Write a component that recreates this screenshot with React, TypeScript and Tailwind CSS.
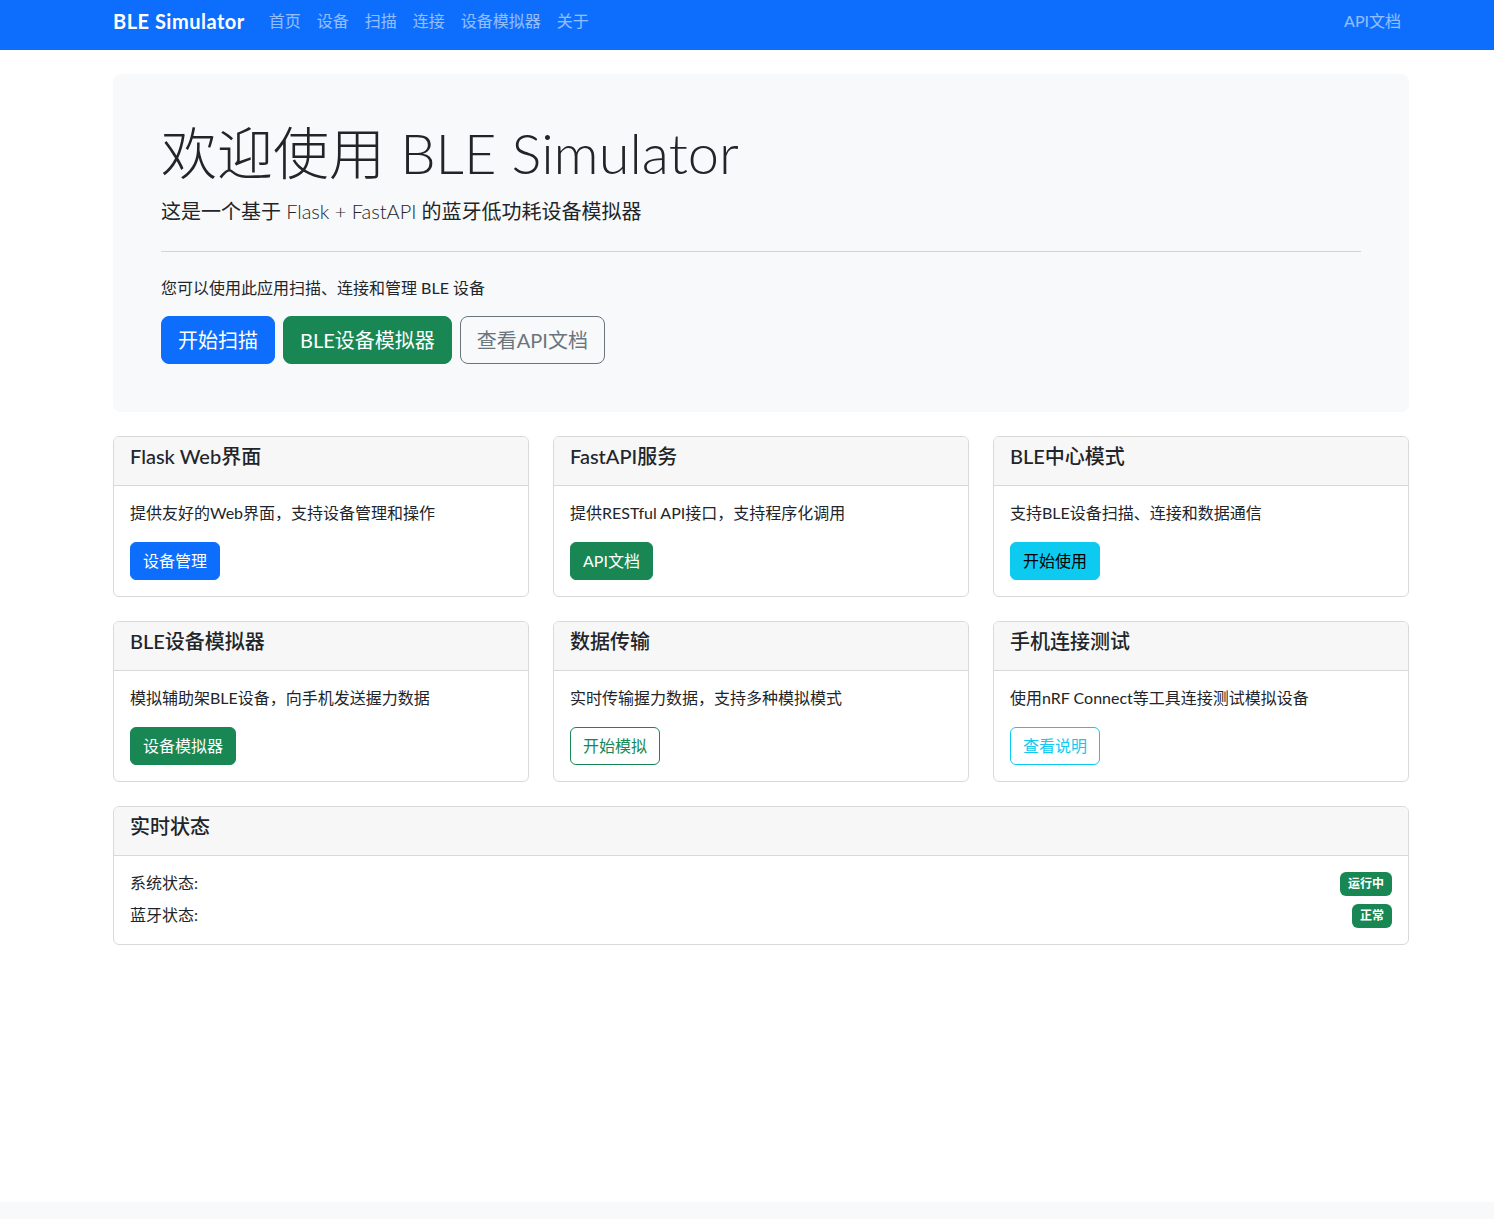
import React from 'react';

type Variant = 'primary' | 'success' | 'info' | 'outline-success' | 'outline-info';

interface Feature {
  title: string;
  text: string;
  button: string;
  variant: Variant;
}

const features: Feature[] = [
  { title: 'Flask Web界面', text: '提供友好的Web界面，支持设备管理和操作', button: '设备管理', variant: 'primary' },
  { title: 'FastAPI服务', text: '提供RESTful API接口，支持程序化调用', button: 'API文档', variant: 'success' },
  { title: 'BLE中心模式', text: '支持BLE设备扫描、连接和数据通信', button: '开始使用', variant: 'info' },
  { title: 'BLE设备模拟器', text: '模拟辅助架BLE设备，向手机发送握力数据', button: '设备模拟器', variant: 'success' },
  { title: '数据传输', text: '实时传输握力数据，支持多种模拟模式', button: '开始模拟', variant: 'outline-success' },
  { title: '手机连接测试', text: '使用nRF Connect等工具连接测试模拟设备', button: '查看说明', variant: 'outline-info' },
];

const variantClass: Record<Variant, string> = {
  primary: 'bg-[#0d6efd] border-[#0d6efd] text-white',
  success: 'bg-[#198754] border-[#198754] text-white',
  info: 'bg-[#0dcaf0] border-[#0dcaf0] text-black',
  'outline-success': 'bg-transparent border-[#198754] text-[#198754]',
  'outline-info': 'bg-transparent border-[#0dcaf0] text-[#0dcaf0]',
};

const navLinks = ['首页', '设备', '扫描', '连接', '设备模拟器', '关于'];

const Card: React.FC<{ title: string; children: React.ReactNode }> = ({ title, children }) => (
  <div className="bg-white border border-[#d9d9d9] rounded-[6px] overflow-hidden">
    <div className="bg-[#f7f7f7] border-b border-[#d9d9d9] px-4 pt-2 pb-2">
      <h5 className="text-[20px] leading-[22px] font-medium mb-[10px]">{title}</h5>
    </div>
    <div className="p-4">{children}</div>
  </div>
);

export default function App() {
  return (
    <div className="bg-white text-[#212529] font-[Lato,'Noto_Sans_CJK_SC',sans-serif] text-[16px] leading-[24px]">
      {/* Navbar */}
      <nav className="bg-[#0d6efd] h-[50px] pb-2">
        <div className="ml-[113px] w-[1296px] h-full flex items-center">
          <span className="text-white text-[20px] leading-[30px] font-bold tracking-[0.5px] mr-4">BLE Simulator</span>
          {navLinks.map(l => (
            <span key={l} className="px-2 text-white/55">{l}</span>
          ))}
          <span className="ml-auto px-2 text-white/55">API文档</span>
        </div>
      </nav>

      <main className="ml-[113px] w-[1296px]">
        {/* Jumbotron */}
        <div className="mt-6 bg-[#f8f9fa] rounded-[8px] p-12">
          <h1 className="text-[56px] leading-[61px] font-light mb-[14px]">欢迎使用 BLE Simulator</h1>
          <p className="text-[20px] leading-[28px] pb-[2px]">
            这是一个基于 <span className="font-light">Flask + FastAPI</span> 的蓝牙低功耗设备模拟器
          </p>
          <hr className="my-6 border-t border-[#d3d4d5]" />
          <p className="mb-4 leading-[23px] pb-[1px]">您可以使用此应用扫描、连接和管理 BLE 设备</p>
          <div className="flex gap-2">
            <span className="h-[48px] px-4 flex items-center text-[20px] rounded-[8px] border bg-[#0d6efd] border-[#0d6efd] text-white">开始扫描</span>
            <span className="h-[48px] px-4 flex items-center text-[20px] rounded-[8px] border bg-[#198754] border-[#198754] text-white">BLE设备模拟器</span>
            <span className="h-[48px] px-4 flex items-center text-[20px] rounded-[8px] border border-[#6c757d] text-[#6c757d]">查看API文档</span>
          </div>
        </div>

        {/* Feature cards */}
        <div className="mt-6 grid grid-cols-3 gap-6">
          {features.map(f => (
            <Card key={f.title} title={f.title}>
              <p className="mb-4 leading-[22px] pb-[2px]">{f.text}</p>
              <span className={`inline-flex items-center h-[38px] px-3 border rounded-[6px] ${variantClass[f.variant]}`}>
                {f.button}
              </span>
            </Card>
          ))}
        </div>

        {/* Status */}
        <div className="mt-6">
          <Card title="实时状态">
            <div className="flex justify-between items-center mb-2">
              <span className="leading-[22px] pb-[2px]">系统状态:</span>
              <span className="bg-[#198754] text-white text-[12px] font-bold leading-[12px] h-[24px] px-[8px] rounded-[6px] flex items-center">运行中</span>
            </div>
            <div className="flex justify-between items-center">
              <span className="leading-[22px] pb-[2px]">蓝牙状态:</span>
              <span className="bg-[#198754] text-white text-[12px] font-bold leading-[12px] h-[24px] px-[8px] rounded-[6px] flex items-center">正常</span>
            </div>
          </Card>
        </div>
      </main>

      <footer className="mt-[257px] h-[18px] bg-[#f8f9fa]" />
    </div>
  );
}
